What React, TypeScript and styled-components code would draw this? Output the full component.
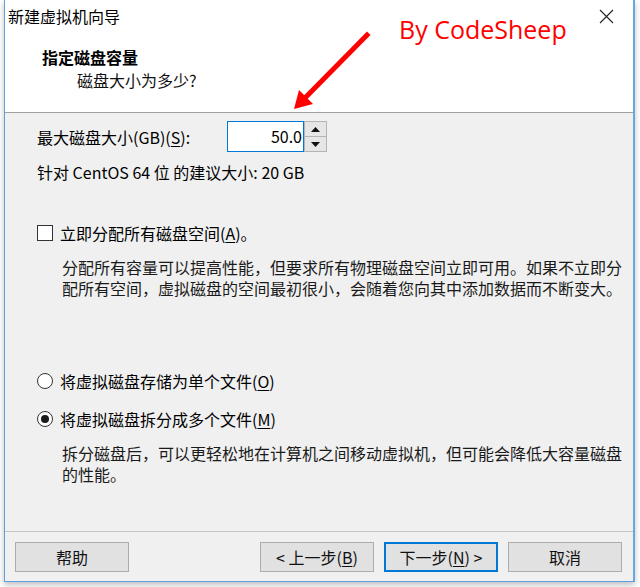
import React from "react";
import styled, { createGlobalStyle } from "styled-components";

const GlobalStyle = createGlobalStyle`
  html, body { margin: 0; padding: 0; background: #ffffff; }
  body { font-family: "Noto Sans CJK SC", "Noto Sans", sans-serif; color: #000; }
  #root { width: 640px; height: 587px; overflow: hidden; }
`;

const CJK = `"Noto Sans CJK SC", "Noto Sans", sans-serif`;

const Window = styled.div`
  position: relative;
  box-sizing: border-box;
  margin-left: 4px;
  width: 631px;
  height: 582px;
  display: flex;
  flex-direction: column;
  background: #f0f0f0;
  border-left: 1px solid #5f9fe0;
  border-right: 2px solid #6aa6e2;
  border-bottom: 1px solid #5f9fe0;
  box-shadow: 0 3px 6px rgba(0, 0, 0, 0.25);
  font-family: ${CJK};
`;

const TitleBar = styled.div`
  height: 34px;
  background: #ffffff;
  display: flex;
  align-items: center;
  justify-content: space-between;
  padding: 0 0 2px 3px;
  box-sizing: border-box;
`;

const Title = styled.span`
  font-size: 16px;
  line-height: 20px;
  color: #000;
`;

const CloseButton = styled.div`
  width: 46px;
  height: 32px;
  display: flex;
  align-items: center;
  justify-content: center;
  margin-right: 4px;
`;

const Header = styled.div`
  height: 79px;
  background: #ffffff;
  border-bottom: 1px solid #a0a0a0;
  display: flex;
  flex-direction: column;
  padding: 13px 0 0 37px;
  box-sizing: border-box;
`;

const HeaderTitle = styled.div`
  font-size: 16px;
  font-weight: 700;
  line-height: 20px;
`;

const HeaderSub = styled.div`
  font-size: 16px;
  line-height: 20px;
  margin: 3px 0 0 35px;
  color: #111;
`;

const Body = styled.div`
  flex: 1;
  display: flex;
  flex-direction: column;
  padding: 8px 0 0 32px;
`;

const SizeRow = styled.div`
  display: grid;
  grid-template-columns: 190px auto;
  align-items: center;
`;

const Text = styled.span`
  font-size: 16px;
  line-height: 20px;
`;

const Spinner = styled.div`
  display: flex;
  height: 31px;
`;

const SpinInput = styled.div`
  box-sizing: border-box;
  width: 77px;
  height: 31px;
  border: 1px solid #0078d7;
  background: #fff;
  font-size: 16px;
  line-height: 29px;
  text-align: right;
  padding-right: 1px;
`;

const SpinButtons = styled.div`
  display: flex;
  flex-direction: column;
  width: 23px;
  height: 31px;
`;

const SpinButton = styled.div<{ $down?: boolean }>`
  box-sizing: border-box;
  flex: 1;
  background: #e6e6e6;
  border: 1px solid #b4b4b4;
  border-top-width: ${(p) => (p.$down ? 0 : 1)}px;
  display: flex;
  align-items: center;
  justify-content: center;
`;

const Hint = styled.div`
  font-size: 16px;
  line-height: 20px;
  margin-top: 10px;
`;

const OptionRow = styled.div<{ $mt: number }>`
  display: flex;
  align-items: center;
  gap: 7px;
  margin-top: ${(p) => p.$mt}px;
  height: 20px;
`;

const CheckBox = styled.div`
  box-sizing: border-box;
  width: 16px;
  height: 16px;
  border: 1px solid #333;
  background: #fff;
`;

const Radio = styled.div<{ $checked?: boolean }>`
  box-sizing: border-box;
  width: 16px;
  height: 16px;
  border-radius: 50%;
  border: 1px solid #333;
  background: #fff;
  display: flex;
  align-items: center;
  justify-content: center;
  &::after {
    content: "";
    display: ${(p) => (p.$checked ? "block" : "none")};
    width: 8px;
    height: 8px;
    border-radius: 50%;
    background: #1a1a1a;
  }
`;

const Desc = styled.div`
  font-size: 16px;
  line-height: 21px;
  margin: 14px 0 0 25px;
  width: 560px;
  color: #1a1a1a;
`;

const Footer = styled.div`
  height: 50px;
  border-top: 1px solid #c4c4c4;
  box-sizing: border-box;
  display: flex;
  align-items: flex-start;
  padding: 10px 11px 0 10px;
`;

const Spacer = styled.div`
  flex: 1;
`;

const Button = styled.div<{ $default?: boolean }>`
  box-sizing: border-box;
  width: 114px;
  height: 30px;
  background: #e1e1e1;
  border: ${(p) => (p.$default ? "2px solid #0078d7" : "1px solid #adadad")};
  font-size: 16px;
  display: flex;
  align-items: center;
  justify-content: center;
  color: #111;
  margin-left: ${(p) => (p.$default ? 10 : 0)}px;
  margin-right: ${(p) => (p.$default ? 10 : 0)}px;
`;

const Watermark = styled.div`
  position: absolute;
  left: 394px;
  top: 12px;
  font-family: "Open Sans", "Noto Sans", sans-serif;
  font-size: 25px;
  line-height: 34px;
  color: #ff0000;
`;

const ArrowLayer = styled.svg`
  position: absolute;
  left: 0;
  top: 0;
  pointer-events: none;
`;

const U = styled.span`
  text-decoration: underline;
  text-underline-offset: 2px;
`;

export default function App() {
  return (
    <>
      <GlobalStyle />
      <Window>
        <TitleBar>
          <Title>新建虚拟机向导</Title>
          <CloseButton>
            <svg width="15" height="15" viewBox="0 0 15 15">
              <path d="M1 1 L14 14 M14 1 L1 14" stroke="#222" strokeWidth="1.1" />
            </svg>
          </CloseButton>
        </TitleBar>
        <Header>
          <HeaderTitle>指定磁盘容量</HeaderTitle>
          <HeaderSub>磁盘大小为多少?</HeaderSub>
        </Header>
        <Body>
          <SizeRow>
            <Text>
              最大磁盘大小(GB)(<U>S</U>):
            </Text>
            <Spinner>
              <SpinInput>50.0</SpinInput>
              <SpinButtons>
                <SpinButton>
                  <svg width="9" height="5" viewBox="0 0 9 5">
                    <path d="M0 5 L4.5 0 L9 5 Z" fill="#111" />
                  </svg>
                </SpinButton>
                <SpinButton $down>
                  <svg width="9" height="5" viewBox="0 0 9 5">
                    <path d="M0 0 L4.5 5 L9 0 Z" fill="#111" />
                  </svg>
                </SpinButton>
              </SpinButtons>
            </Spinner>
          </SizeRow>
          <Hint>针对 CentOS 64 位 的建议大小: 20 GB</Hint>
          <OptionRow $mt={41}>
            <CheckBox />
            <Text>
              立即分配所有磁盘空间(<U>A</U>)。
            </Text>
          </OptionRow>
          <Desc>
            分配所有容量可以提高性能，但要求所有物理磁盘空间立即可用。如果不立即分配所有空间，虚拟磁盘的空间最初很小，会随着您向其中添加数据而不断变大。
          </Desc>
          <OptionRow $mt={72}>
            <Radio />
            <Text>
              将虚拟磁盘存储为单个文件(<U>O</U>)
            </Text>
          </OptionRow>
          <OptionRow $mt={18}>
            <Radio $checked />
            <Text>
              将虚拟磁盘拆分成多个文件(<U>M</U>)
            </Text>
          </OptionRow>
          <Desc>
            拆分磁盘后，可以更轻松地在计算机之间移动虚拟机，但可能会降低大容量磁盘的性能。
          </Desc>
        </Body>
        <Footer>
          <Button>帮助</Button>
          <Spacer />
          <Button>
            &lt; 上一步(<U>B</U>)
          </Button>
          <Button $default>
            下一步(<U>N</U>) &gt;
          </Button>
          <Button>取消</Button>
        </Footer>
        <Watermark>By CodeSheep</Watermark>
        <ArrowLayer width="631" height="140" viewBox="4 0 631 140">
          <line x1="366" y1="35" x2="303" y2="99" stroke="#ff0000" strokeWidth="5" strokeLinecap="square" />
          <path d="M293 109 L298 90 L312 104 Z" fill="#ff0000" />
        </ArrowLayer>
      </Window>
    </>
  );
}
